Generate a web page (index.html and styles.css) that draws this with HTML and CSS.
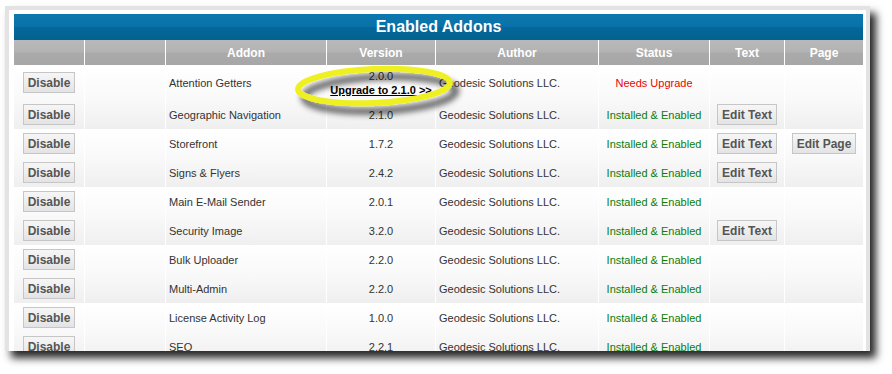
FILE: index.html
```html
<!DOCTYPE html>
<html lang="en">
<head>
<meta charset="utf-8">
<title>Enabled Addons</title>
<link rel="stylesheet" href="styles.css">
</head>
<body>
<div class="screen">
  <div class="panel">
    <table class="addons">
      <colgroup>
        <col class="c1"><col class="c2"><col class="c3"><col class="c4">
        <col class="c5"><col class="c6"><col class="c7"><col class="c8">
      </colgroup>
      <thead>
        <tr class="title-row"><th colspan="8">Enabled Addons</th></tr>
        <tr class="head-row">
          <th></th><th></th><th>Addon</th><th>Version</th><th>Author</th><th>Status</th><th>Text</th><th>Page</th>
        </tr>
      </thead>
      <tbody>
        <tr class="odd first">
          <td class="act"><button class="btn">Disable</button></td><td></td>
          <td class="name">Attention Getters</td>
          <td class="ver">2.0.0<br><a class="upgrade" href="#">Upgrade to 2.1.0 &gt;&gt;</a></td>
          <td class="author">Geodesic Solutions LLC.</td>
          <td class="status warn">Needs Upgrade</td><td></td><td></td>
        </tr>
        <tr class="even">
          <td class="act"><button class="btn">Disable</button></td><td></td>
          <td class="name">Geographic Navigation</td><td class="ver">2.1.0</td>
          <td class="author">Geodesic Solutions LLC.</td>
          <td class="status ok">Installed &amp; Enabled</td>
          <td class="act"><button class="btn">Edit Text</button></td><td></td>
        </tr>
        <tr class="odd">
          <td class="act"><button class="btn">Disable</button></td><td></td>
          <td class="name">Storefront</td><td class="ver">1.7.2</td>
          <td class="author">Geodesic Solutions LLC.</td>
          <td class="status ok">Installed &amp; Enabled</td>
          <td class="act"><button class="btn">Edit Text</button></td>
          <td class="act"><button class="btn">Edit Page</button></td>
        </tr>
        <tr class="even">
          <td class="act"><button class="btn">Disable</button></td><td></td>
          <td class="name">Signs &amp; Flyers</td><td class="ver">2.4.2</td>
          <td class="author">Geodesic Solutions LLC.</td>
          <td class="status ok">Installed &amp; Enabled</td>
          <td class="act"><button class="btn">Edit Text</button></td><td></td>
        </tr>
        <tr class="odd">
          <td class="act"><button class="btn">Disable</button></td><td></td>
          <td class="name">Main E-Mail Sender</td><td class="ver">2.0.1</td>
          <td class="author">Geodesic Solutions LLC.</td>
          <td class="status ok">Installed &amp; Enabled</td><td></td><td></td>
        </tr>
        <tr class="even">
          <td class="act"><button class="btn">Disable</button></td><td></td>
          <td class="name">Security Image</td><td class="ver">3.2.0</td>
          <td class="author">Geodesic Solutions LLC.</td>
          <td class="status ok">Installed &amp; Enabled</td>
          <td class="act"><button class="btn">Edit Text</button></td><td></td>
        </tr>
        <tr class="odd">
          <td class="act"><button class="btn">Disable</button></td><td></td>
          <td class="name">Bulk Uploader</td><td class="ver">2.2.0</td>
          <td class="author">Geodesic Solutions LLC.</td>
          <td class="status ok">Installed &amp; Enabled</td><td></td><td></td>
        </tr>
        <tr class="even">
          <td class="act"><button class="btn">Disable</button></td><td></td>
          <td class="name">Multi-Admin</td><td class="ver">2.2.0</td>
          <td class="author">Geodesic Solutions LLC.</td>
          <td class="status ok">Installed &amp; Enabled</td><td></td><td></td>
        </tr>
        <tr class="odd">
          <td class="act"><button class="btn">Disable</button></td><td></td>
          <td class="name">License Activity Log</td><td class="ver">1.0.0</td>
          <td class="author">Geodesic Solutions LLC.</td>
          <td class="status ok">Installed &amp; Enabled</td><td></td><td></td>
        </tr>
        <tr class="even">
          <td class="act"><button class="btn">Disable</button></td><td></td>
          <td class="name">SEO</td><td class="ver">2.2.1</td>
          <td class="author">Geodesic Solutions LLC.</td>
          <td class="status ok">Installed &amp; Enabled</td><td></td><td></td>
        </tr>
      </tbody>
    </table>
  </div>
  <svg class="highlight" width="200" height="80" viewBox="0 0 200 80" aria-hidden="true">
    <defs>
      <filter id="shadow" x="-20%" y="-60%" width="150%" height="230%">
        <feGaussianBlur in="SourceAlpha" stdDeviation="3" result="b"/>
        <feOffset in="b" dx="6" dy="8" result="o"/>
        <feComponentTransfer in="o" result="s"><feFuncA type="linear" slope="0.7"/></feComponentTransfer>
        <feGaussianBlur in="SourceGraphic" stdDeviation="0.7" result="g"/>
        <feMerge><feMergeNode in="s"/><feMergeNode in="g"/></feMerge>
      </filter>
    </defs>
    <g filter="url(#shadow)">
      <ellipse cx="94" cy="36" rx="76" ry="17" fill="none" stroke="#eef020" stroke-width="6" transform="rotate(-2.5 94 36)"/>
    </g>
  </svg>
</div>
</body>
</html>
```

FILE: styles.css
```css
html, body {
  margin: 0;
  padding: 0;
  background: #ffffff;
}

body {
  font-family: "Liberation Sans", Arial, sans-serif;
  font-size: 11px;
  color: #333333;
}

.screen {
  position: relative;
  width: 892px;
  height: 374px;
  overflow: hidden;
  padding: 6px 0 0 5px;
  box-sizing: border-box;
}

.panel {
  width: 865px;
  height: 345px;
  box-sizing: border-box;
  border: 4px solid #e3e3e3;
  border-bottom: none;
  padding: 4px 3px 0 5px;
  background: #ffffff;
  overflow: hidden;
  box-shadow: 6px 7px 8px rgba(0, 0, 0, 0.85);
}

.addons {
  width: 849px;
  table-layout: fixed;
  border-collapse: separate;
  border-spacing: 0;
}

.c1 { width: 70px; }
.c2 { width: 81px; }
.c3 { width: 161px; }
.c4 { width: 109px; }
.c5 { width: 163px; }
.c6 { width: 111px; }
.c7 { width: 75px; }
.c8 { width: 79px; }

.addons th,
.addons td {
  padding: 0;
  box-sizing: border-box;
}

.title-row th {
  height: 26px;
  background: linear-gradient(#0c77ae, #0971a8 50%, #05679c 52%, #02628f);
  color: #ffffff;
  font-size: 16px;
  font-weight: bold;
  text-align: center;
  vertical-align: middle;
}

.head-row th {
  height: 25px;
  background: linear-gradient(#b9b9b9, #b3b3b3 48%, #aaaaaa 52%, #a7a7a7);
  color: #ffffff;
  font-size: 12px;
  font-weight: bold;
  text-align: center;
  vertical-align: middle;
}

.head-row th + th,
tbody td + td {
  border-left: 1px solid #ffffff;
}

tbody tr {
  height: 29px;
}

tbody tr.first {
  height: 35px;
}

tbody td {
  vertical-align: middle;
  white-space: nowrap;
  overflow: hidden;
}

tbody tr.odd td {
  background: linear-gradient(#ffffff, #f9f9f9);
}

tbody tr.even td {
  background: linear-gradient(#f9f9f9, #efefef);
}

.act {
  text-align: center;
}

.addons .name,
.addons .author {
  padding-left: 3px;
}

.ver {
  text-align: center;
  line-height: 14px;
}

.upgrade {
  color: #000000;
  font-weight: bold;
  text-decoration: underline;
}

.status {
  text-align: center;
}

.warn {
  color: #ee0000;
}

.ok {
  color: #0a7d0a;
}

.btn {
  display: inline-block;
  box-sizing: border-box;
  height: 21px;
  padding: 2px 4px 0;
  margin: 0;
  border: 1px solid #c6c6c6;
  border-radius: 0;
  background: linear-gradient(#f6f6f6, #ededed 55%, #e3e3e6);
  color: #555555;
  font-family: "Liberation Sans", Arial, sans-serif;
  font-size: 12px;
  font-weight: bold;
  line-height: 17px;
  vertical-align: middle;
}

.highlight {
  position: absolute;
  left: 280px;
  top: 50px;
}
```
